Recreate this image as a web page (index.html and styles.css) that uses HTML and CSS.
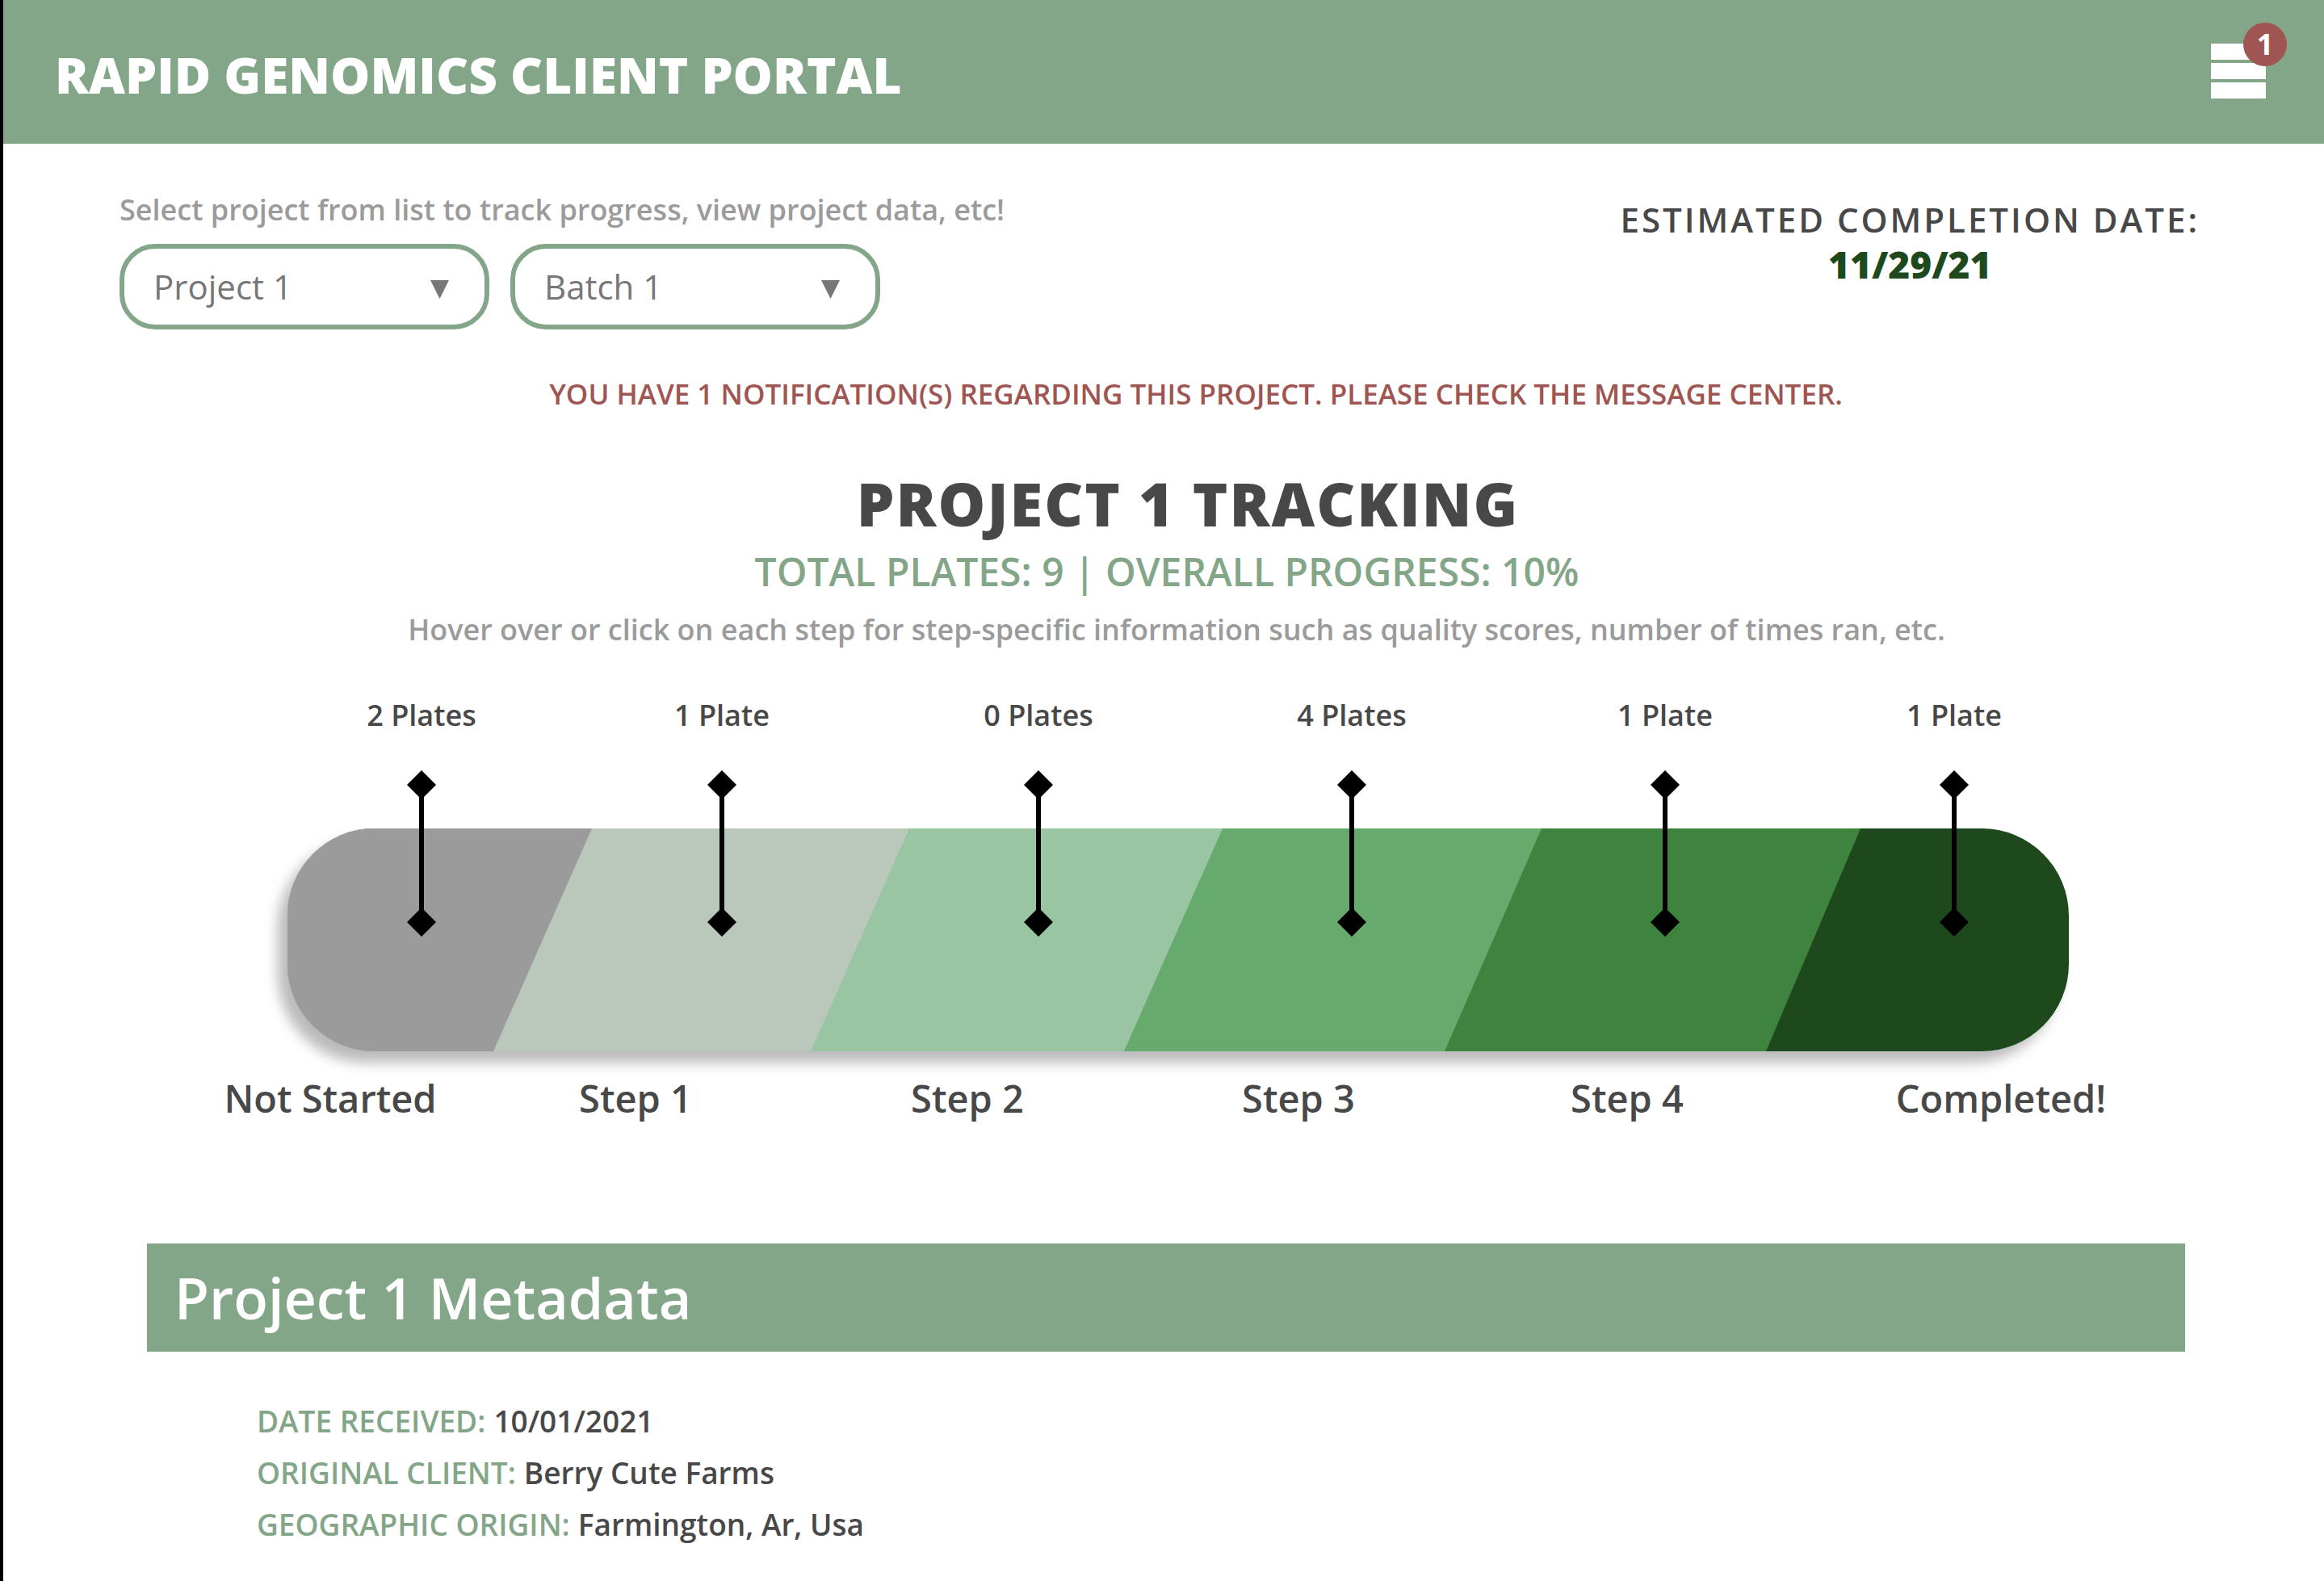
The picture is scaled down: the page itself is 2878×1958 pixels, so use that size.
FILE: index.html
```html
<!DOCTYPE html>
<html lang="en">
<head>
<meta charset="utf-8">
<meta name="viewport" content="width=device-width, initial-scale=1">
<title>Rapid Genomics Client Portal</title>
<link rel="stylesheet" href="styles.css">
</head>
<body>
<header class="topbar">
  <h1 class="brand">RAPID GENOMICS CLIENT PORTAL</h1>
  <button class="menu" type="button" aria-label="Menu, 1 notification">
    <span class="menu-bar"></span>
    <span class="menu-bar"></span>
    <span class="menu-bar"></span>
    <span class="badge">1</span>
  </button>
</header>
<main>
  <section class="controls">
    <div class="picker">
      <p class="hint">Select project from list to track progress, view project data, etc!</p>
      <div class="selects">
        <div class="select-wrap">
          <select class="select" aria-label="Project"><option>Project 1</option></select>
        </div>
        <div class="select-wrap">
          <select class="select" aria-label="Batch"><option>Batch 1</option></select>
        </div>
      </div>
    </div>
    <div class="estimate">
      <p class="estimate-label">ESTIMATED COMPLETION DATE:</p>
      <p class="estimate-date">11/29/21</p>
    </div>
  </section>

  <p class="notice">YOU HAVE 1 NOTIFICATION(S) REGARDING THIS PROJECT. PLEASE CHECK THE MESSAGE CENTER.</p>

  <section class="tracking">
    <h2 class="tracking-title">PROJECT 1 TRACKING</h2>
    <p class="tracking-summary">TOTAL PLATES: 9 | OVERALL PROGRESS: 10%</p>
    <p class="hint tracking-hint">Hover over or click on each step for step-specific information such as quality scores, number of times ran, etc.</p>

    <div class="markers">
      <div class="marker"><span>2 Plates</span><i class="pin"></i></div>
      <div class="marker"><span>1 Plate</span><i class="pin"></i></div>
      <div class="marker"><span>0 Plates</span><i class="pin"></i></div>
      <div class="marker"><span>4 Plates</span><i class="pin"></i></div>
      <div class="marker"><span>1 Plate</span><i class="pin"></i></div>
      <div class="marker"><span>1 Plate</span><i class="pin"></i></div>
    </div>
    <div class="bar">
      <svg class="bar-fill" viewBox="0 0 2206 276" preserveAspectRatio="none" aria-hidden="true">
        <rect width="2206" height="276" fill="#1d491c"/>
        <polygon points="0,0 1948,0 1831,276 0,276" fill="#3e843f"/>
        <polygon points="0,0 1553,0 1433,276 0,276" fill="#66ab6d"/>
        <polygon points="0,0 1158,0 1036,276 0,276" fill="#9ac5a2"/>
        <polygon points="0,0 770,0 648,276 0,276" fill="#bac7bb"/>
        <polygon points="0,0 377,0 255,276 0,276" fill="#9b9b9b"/>
      </svg>
    </div>
    <div class="steps">
      <span>Not Started</span>
      <span>Step 1</span>
      <span>Step 2</span>
      <span>Step 3</span>
      <span>Step 4</span>
      <span>Completed!</span>
    </div>
  </section>

  <section class="metadata">
    <h2 class="metadata-title">Project 1 Metadata</h2>
    <dl class="facts">
      <div class="fact"><dt>DATE RECEIVED:</dt><dd>10/01/2021</dd></div>
      <div class="fact"><dt>ORIGINAL CLIENT:</dt><dd>Berry Cute Farms</dd></div>
      <div class="fact"><dt>GEOGRAPHIC ORIGIN:</dt><dd>Farmington, Ar, Usa</dd></div>
    </dl>
  </section>
</main>
</body>
</html>
```
FILE: styles.css
```css
* { box-sizing: border-box; }

:root {
  --sage: #84a688;
  --red: #9f5552;
  --ink: #484848;
  --muted: #9b9b9b;
  --forest: #1d491c;
}

body {
  margin: 0;
  border-left: 4px solid #000;
  min-height: 100vh;
  background: #fff;
  color: var(--ink);
  font-family: "Trebuchet MS", "Open Sans", "Noto Sans", sans-serif;
  font-size: 36px;
  line-height: 48px;
  font-weight: 600;
}

h1, h2, p, dl, dd { margin: 0; }

.topbar {
  display: flex;
  align-items: flex-start;
  justify-content: space-between;
  padding: 52px 72px 46px 64px;
  background: var(--sage);
}

.brand {
  color: #fff;
  font-size: 62px;
  line-height: 80px;
  font-weight: 800;
}

.menu {
  position: relative;
  display: flex;
  flex-direction: column;
  gap: 4px;
  width: 68px;
  margin: 2px 0 0;
  padding: 0;
  border: 0;
  background: none;
  font: inherit;
}

.menu-bar { height: 20px; background: #fff; }

.badge {
  position: absolute;
  top: -26px;
  right: -26px;
  width: 54px;
  height: 54px;
  border-radius: 50%;
  background: var(--red);
  color: #fff;
  font-weight: 700;
  line-height: 54px;
  text-align: center;
}

.controls {
  display: flex;
  justify-content: space-between;
  padding: 58px 154px 0 144px;
}

.hint { color: var(--muted); }

.selects {
  display: flex;
  gap: 26px;
  margin-top: 18px;
}

.select-wrap { position: relative; width: 458px; }

.select-wrap::after {
  content: "";
  position: absolute;
  top: 45px;
  right: 50px;
  width: 23px;
  height: 23px;
  background: #777;
  clip-path: polygon(0 0, 100% 0, 50% 100%);
  pointer-events: none;
}

.select {
  appearance: none;
  display: block;
  width: 100%;
  height: 106px;
  padding: 0 36px;
  border: 6px solid var(--sage);
  border-radius: 44px;
  background: #fff;
  color: #777;
  font: 400 42px/56px "Trebuchet MS", "Open Sans", "Noto Sans", sans-serif;
}

.estimate { padding-top: 8px; text-align: center; }

.estimate-label {
  font-size: 42px;
  line-height: 56px;
  letter-spacing: 3px;
}

.estimate-date {
  color: var(--forest);
  font-size: 46px;
  line-height: 54px;
  font-weight: 800;
}

.notice {
  margin-top: 56px;
  padding-left: 80px;
  color: var(--red);
  font-size: 35px;
  text-align: center;
}

.tracking { margin-top: 60px; text-align: center; }

.tracking-title {
  padding-left: 60px;
  font-size: 74px;
  line-height: 104px;
  font-weight: 800;
  letter-spacing: 2px;
}

.tracking-summary {
  padding: 2px 0 0 8px;
  color: var(--sage);
  font-size: 48px;
  line-height: 60px;
}

.tracking-hint { margin-top: 18px; padding-left: 32px; }

.markers {
  position: relative;
  z-index: 1;
  display: grid;
  grid-template-columns: 372fr 372fr 412fr 364fr 412fr 304fr;
  margin: 58px 306px 0 332px;
}

.marker {
  display: flex;
  flex-direction: column;
  align-items: center;
  gap: 44px;
}

.pin {
  position: relative;
  width: 36px;
  height: 206px;
  background: linear-gradient(#000, #000) center / 6px 172px no-repeat;
}

.pin::before,
.pin::after {
  content: "";
  position: absolute;
  left: 0;
  width: 36px;
  height: 36px;
  background: #000;
  clip-path: polygon(50% 0, 100% 50%, 50% 100%, 0 50%);
}

.pin::before { top: 0; }
.pin::after { bottom: 0; }

.bar {
  height: 276px;
  margin: -134px 316px 0 352px;
  border-radius: 108px;
  overflow: hidden;
  box-shadow: -12px 14px 16px rgba(0, 0, 0, 0.27);
}

.bar-fill { display: block; width: 100%; height: 100%; }

.steps {
  display: grid;
  grid-template-columns: 378fr 378fr 444fr 376fr 438fr 488fr;
  margin: 26px 156px 0 216px;
  font-size: 47px;
  line-height: 64px;
}

.metadata { margin: 148px 172px 0 178px; }

.metadata-title {
  padding: 20px 34px;
  background: var(--sage);
  color: #fff;
  font-size: 70px;
  line-height: 94px;
  font-weight: 600;
}

.facts {
  margin-top: 54px;
  padding-left: 136px;
  font-size: 37px;
  line-height: 64px;
}

.fact { display: flex; gap: 10px; }
.fact dt { color: var(--sage); }
```
